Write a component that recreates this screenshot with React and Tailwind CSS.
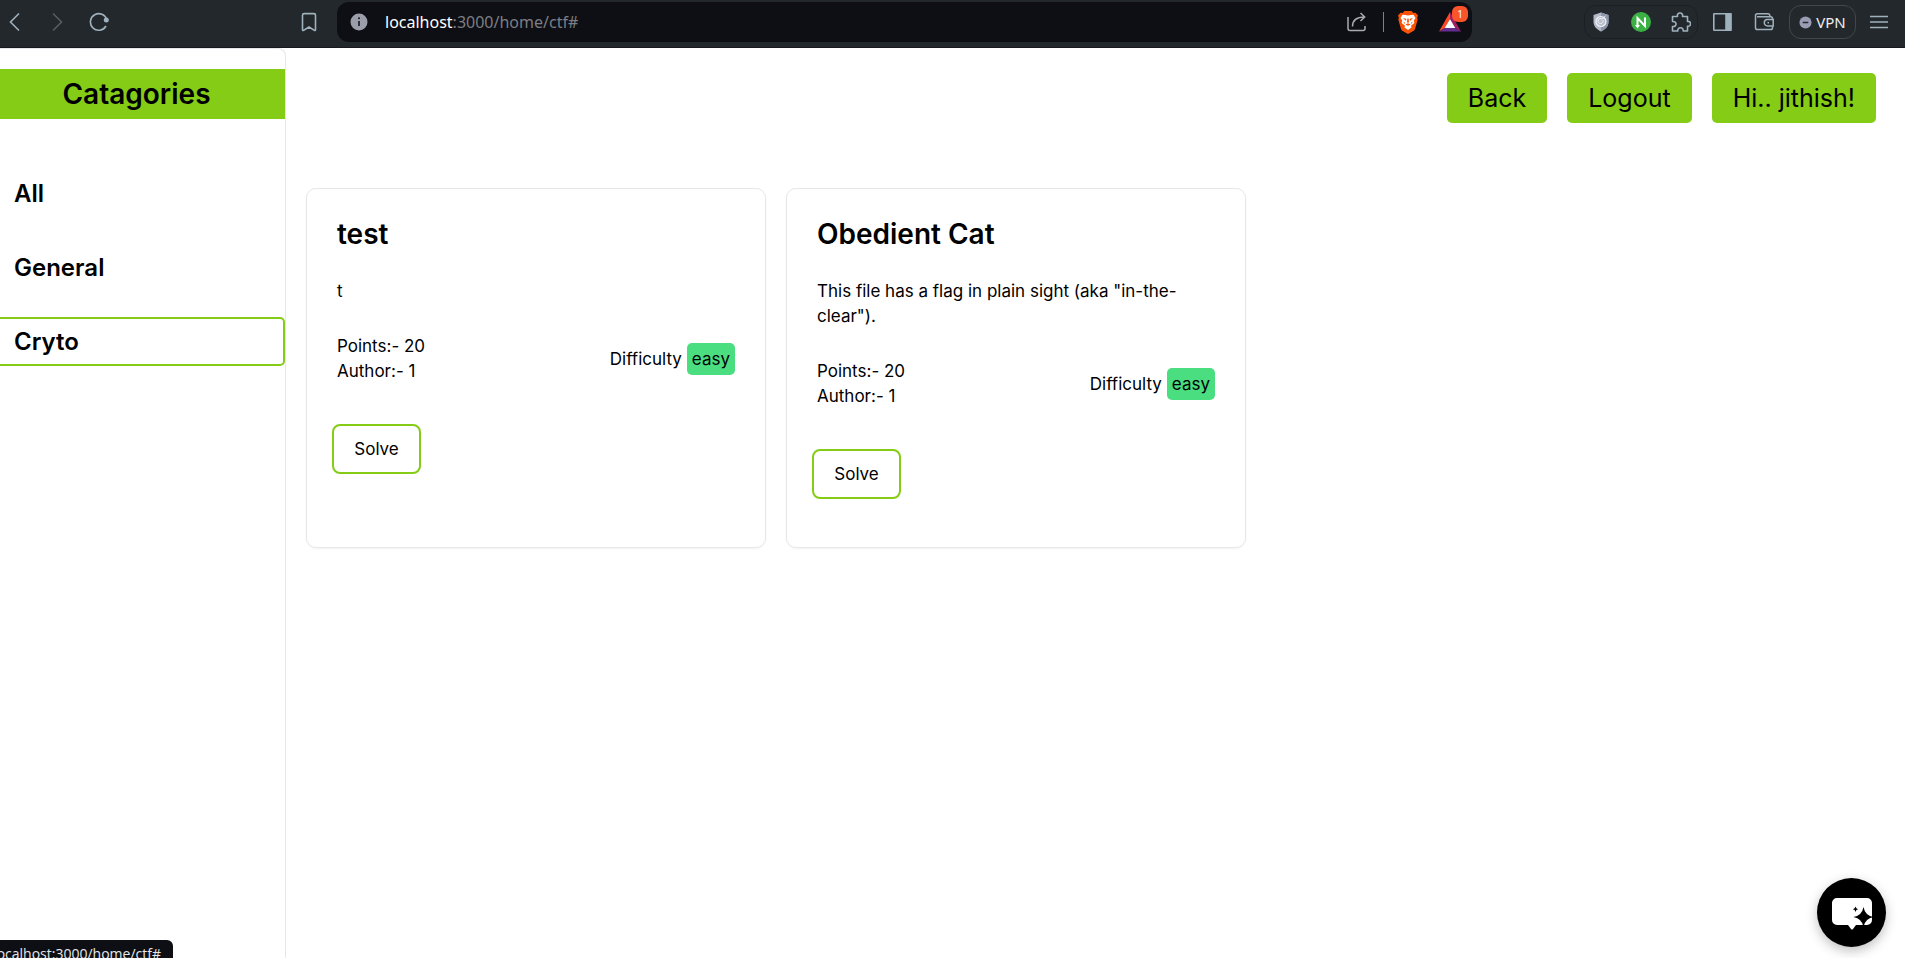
import React from "react";

const ICON = "h-5 w-5 fill-none stroke-[#9fb1bd]";

function BrowserBar() {
  return (
    <header className="flex h-12 items-center border-b border-[#17191d] bg-[#23282c] pb-[3px] font-['Noto_Sans',sans-serif]">
      <div className="flex w-[337px] shrink-0 items-center gap-[22px] pl-[5px] pr-[18px]">
        <button aria-label="Back" className="h-5 w-5">
          <svg viewBox="0 0 20 20" className={ICON} strokeWidth="1.6">
            <path d="M14 1.5 5.5 10l8.500 8.500" />
          </svg>
        </button>
        <button aria-label="Forward" className="h-5 w-5">
          <svg viewBox="0 0 20 20" className="h-5 w-5 fill-none stroke-[#565d63]" strokeWidth="1.6">
            <path d="M6 1.500 14.500 10 6 18.500" />
          </svg>
        </button>
        <button aria-label="Reload" className="h-5 w-5">
          <svg viewBox="0 0 20 20" className={ICON} strokeWidth="1.600">
            <path d="M17.800 8A8.300 8.300 0 1 0 17 14" />
            <circle cx="17.300" cy="8" r="2.500" fill="#9fb1bd" stroke="none" />
          </svg>
        </button>
        <button aria-label="Bookmark" className="ml-auto h-5 w-5">
          <svg viewBox="0 0 20 20" className={ICON} strokeWidth="1.600">
            <path d="M3.500 3.200c0-1 .6-1.600 1.600-1.600h9.800c1 0 1.600.6 1.600 1.600v14.600c0 .6-.6.9-1.100.5L10 15l-5.400 3.300c-.5.4-1.100.1-1.100-.5z" />
          </svg>
        </button>
      </div>

      <div className="flex h-10 min-w-0 flex-1 items-center rounded-xl bg-[#0d0f14] pl-3">
        <svg viewBox="0 0 20 20" className="h-5 w-5 shrink-0" aria-hidden="true">
          <circle cx="10" cy="10" r="8.500" fill="#9b9ea8" />
          <path d="M10 9v5" stroke="#15171c" strokeWidth="1.600" />
          <circle cx="10" cy="6.300" r="1" fill="#15171c" />
        </svg>
        <p className="ml-4 flex-1 text-base text-[#7b7e84]">
          <span className="text-white">localhost</span>:3000/home/ctf#
        </p>
        <button aria-label="Share" className="h-5 w-5">
          <svg viewBox="0 0 20 20" className="h-5 w-5 fill-none stroke-[#a9abb0]" strokeWidth="1.500">
            <path d="M1 5v11.500c0 1.300.7 2 2 2h13c1.300 0 2-.7 2-2V14" />
            <path d="M5.500 14.500C5.500 8.500 9 5 17.500 5M13.500 1l4.200 4-4.200 4" />
          </svg>
        </button>
        <span className="ml-4 h-5 w-px bg-[#7d8086]" />
        <button aria-label="Brave Shields" className="ml-3 h-6 w-6">
          <svg viewBox="0 0 24 24" className="h-6 w-6">
            <path d="M8.500 1h7l2 2 2-.3L22 5.500l-.8 2.200.5 1.800-2.700 9.500c-.3 1-.9 1.600-1.700 2.100L12 24l-5.300-2.900c-.8-.5-1.400-1.100-1.700-2.100L2.300 9.500l.5-1.800L2 5.500l2.500-2.800 2 .3z" fill="#fb5305" />
            <path d="M12 5.500 9.500 5 6.500 4.800 4.500 8l1.700 2.600-.5 2.400 3.300 2.800-.5 1.600L12 20l3.500-2.600-.5-1.600 3.300-2.800-.5-2.400L19.500 8l-2-3.200-3 .2z" fill="#fff" />
            <path d="M7 8l3.500 1-.8 1.800zM17 8l-3.500 1 .8 1.800zM9.300 14.500 12 13.200l2.700 1.300-2.700 1.300zM11.400 8.500h1.200l.4 3.500-1 1-1-1zM7.500 11.500l1.700 1.500-1 .8zM16.500 11.500 14.800 13l1 .8z" fill="#fb5305" />
          </svg>
        </button>
        <button aria-label="Brave Rewards, 1 new" className="relative ml-4 h-8 w-9">
          <svg viewBox="0 0 36 32" className="h-8 w-9">
            <path d="M14 6 3 25.500l6-3.500 5-9z" fill="#ff4724" />
            <path d="M14 6l11 19.500-6-3.500-5-9z" fill="#9e1f63" />
            <path d="M3 25.500h22L19 22H9z" fill="#662d91" />
            <path d="M14 13l5.300 9H8.700z" fill="#fff" />
          </svg>
          <span className="absolute right-1 top-0 h-4 w-4 rounded-md bg-[#fb542b] text-center text-[10px] leading-4 text-white">1</span>
        </button>
      </div>

      <div className="flex w-[433px] shrink-0 items-center justify-end pr-[17px]">
        <div className="flex h-[34px] items-center gap-5 rounded-xl border border-[#1c2024] px-[6px]">
          <button aria-label="Privacy extension" className="h-5 w-5">
            <svg viewBox="0 0 20 20" className="h-5 w-5">
              <path d="M10 .5 17.500 3v7c0 4.500-3.500 7.500-7.500 9.500C6 17.500 2.500 14.500 2.500 10V3z" fill="#b4bac8" />
              <path d="M10 .5 17.500 3v7c0 4.500-3.500 7.500-7.500 9.500z" fill="#8d96a8" />
              <circle cx="10" cy="9.500" r="5" fill="#b9bfcc" stroke="#f1f3f7" strokeWidth="1.200" />
              <path d="M12 8.500a2.500 2.500 0 1 1-1-1.500l3.500-3" fill="none" stroke="#f1f3f7" strokeWidth="1" />
            </svg>
          </button>
          <button aria-label="N extension" className="h-5 w-5">
            <svg viewBox="0 0 20 20" className="h-5 w-5">
              <circle cx="10" cy="10" r="10" fill="#3bb143" />
              <path d="M6.500 14.500V6l7.500 8V5.500" fill="none" stroke="#fff" strokeWidth="2" />
              <path d="M4 13h5l-2.500 3.500z" fill="#fff" />
            </svg>
          </button>
          <button aria-label="Extensions" className="h-5 w-5">
            <svg viewBox="0 0 20 20" className={ICON} strokeWidth="1.600" strokeLinejoin="round">
              <path d="M1.500 4.500h5C6 2.500 7 1 9 1s3 1.500 2.500 3.500h5v5c2-.4 3 .8 3 2.300s-1 2.800-3 2.400v4.800h-4.300c.2-2-.8-3.200-2.700-3.200S6.600 17 6.800 19H1.500v-4.500c2.300.3 3.500-.8 3.500-2.500S3.800 9.300 1.500 9.500z" />
            </svg>
          </button>
        </div>
        <button aria-label="Side panel" className="ml-[14px] h-5 w-5">
          <svg viewBox="0 0 20 20" className={ICON} strokeWidth="1.600">
            <rect x="1.800" y="1.800" width="17" height="16.400" rx=".5" />
            <path d="M14 1.800h4.800v16.400H14z" fill="#9fb1bd" />
          </svg>
        </button>
        <button aria-label="Wallet" className="ml-[22px] h-5 w-5">
          <svg viewBox="0 0 20 20" className={ICON} strokeWidth="1.500">
            <path d="M18.500 7.500V6.500c0-1.200-.6-1.800-1.800-1.800H3M1.500 3.500v12.200c0 1.200.6 1.800 1.800 1.800h13.400c1.200 0 1.800-.6 1.800-1.800v-1.200M1.500 3.500c0-1.200.6-1.800 1.800-1.800H14c1.200 0 1.800.6 1.800 1.800v1.200" />
            <path d="M19.200 7.500h-5.700a3.200 3.200 0 0 0 0 6.400h5.700zM13.500 10.700h1.500" />
          </svg>
        </button>
        <button className="ml-[15px] flex h-[34px] w-[67px] items-center justify-center gap-1 rounded-xl border border-[#3f484b] text-[15px] text-[#eceef0]">
          <svg viewBox="0 0 14 14" className="h-[13px] w-[13px]" aria-hidden="true">
            <circle cx="7" cy="7" r="6.500" fill="#9a9cb4" />
            <path d="M4 7h6" stroke="#23282c" strokeWidth="1.600" />
          </svg>
          VPN
        </button>
        <button aria-label="Menu" className="ml-[14px] h-5 w-[18px]">
          <svg viewBox="0 0 18 20" className="h-5 w-[18px] stroke-[#9fb1bd]" strokeWidth="1.500">
            <path d="M0 4.500h18M0 10h18M0 15.500h18" />
          </svg>
        </button>
      </div>
    </header>
  );
}

const categories = ["All", "General", "Cryto"];
const active = "Cryto";

function Sidebar() {
  return (
    <aside className="w-[286px] shrink-0 rounded-tr-lg border-r border-t border-gray-200 pt-5">
      <h2 className="bg-[#84cc16] pr-3 text-center text-[28px] font-semibold leading-[50px]">Catagories</h2>
      <nav className="mt-[50px] flex flex-col gap-[25px]">
        {categories.map((name) => (
          <a
            key={name}
            href="#"
            className={
              "rounded-r-[5px] border-y-2 border-r-2 pl-[14px] text-2xl/[45px] font-semibold " +
              (name === active ? "border-[#84cc16]" : "border-transparent")
            }
          >
            {name}
          </a>
        ))}
      </nav>
    </aside>
  );
}

const challenges = [
  { title: "test", text: "t", points: 20, author: 1, level: "easy" },
  {
    title: "Obedient Cat",
    text: 'This file has a flag in plain sight (aka "in-the-clear").',
    points: 20,
    author: 1,
    level: "easy",
  },
];

function Card({ item }) {
  return (
    <article className="min-h-[360px] w-[460px] max-w-full rounded-[10px] border border-gray-200 px-[25px] py-[25px] shadow-xs">
      <div className="px-[5px]">
        <h3 className="text-[28px] font-semibold leading-10">{item.title}</h3>
        <p className="mt-[25px]">{item.text}</p>
        <div className="mt-[30px] flex items-center justify-between">
          <div>
            <p>Points:- {item.points}</p>
            <p>Author:- {item.author}</p>
          </div>
          <p className="flex items-center gap-[5px]">
            Difficulty
            <span className="rounded-[5px] bg-[#4ade80] px-[5px] leading-8">{item.level}</span>
          </p>
        </div>
      </div>
      <button className="mt-10 h-[50px] w-[89px] rounded-lg border-2 border-[#84cc16]">Solve</button>
    </article>
  );
}

export default function App() {
  return (
    <div className="flex min-h-screen flex-col bg-white font-[Inter,sans-serif] text-[17px] leading-[25px] text-black">
      <BrowserBar />
      <div className="flex flex-1">
        <Sidebar />
        <main className="min-w-0 flex-1">
          <div className="flex justify-end gap-5 pr-[29px] pt-[25px] text-[25px]">
            {["Back", "Logout", "Hi.. jithish!"].map((label) => (
              <button key={label} className="h-[50px] rounded-[5px] bg-[#84cc16] px-[21px]">
                {label}
              </button>
            ))}
          </div>
          <section className="mt-[65px] flex flex-wrap gap-5 px-5">
            {challenges.map((item) => (
              <Card key={item.title} item={item} />
            ))}
          </section>
        </main>
      </div>

      <button
        aria-label="Open chat"
        className="fixed bottom-[11px] right-[19px] h-[69px] w-[69px] rounded-full bg-black shadow-[0_4px_12px_rgba(0,0,0,0.25)]"
      >
        <svg viewBox="0 0 69 69" className="h-full w-full">
          <path d="M20 20h30a5 5 0 0 1 5 5v17a5 5 0 0 1-5 5H39l-3 4q-1 1-2 0l-3-4H20a5 5 0 0 1-5-5V25a5 5 0 0 1 5-5z" fill="#fff" />
          <path d="M46.500 29q1.500 8.500 10 10-8.500 1.500-10 10-1.500-8.500-10-10 8.500-1.500 10-10z" fill="#000" />
          <path d="M38.500 28.500q.4 2.300 2.600 2.700-2.200.4-2.600 2.700-.4-2.300-2.600-2.700 2.200-.4 2.600-2.700z" fill="#000" />
        </svg>
      </button>

      <div className="fixed bottom-0 left-0 flex h-[18px] w-[173px] justify-end overflow-hidden rounded-tr-md bg-[#0d0f14] pr-3 pt-1 font-['Open_Sans',sans-serif] text-sm leading-5 text-[#e6e7e9]">
        localhost:3000/home/ctf#
      </div>
    </div>
  );
}
